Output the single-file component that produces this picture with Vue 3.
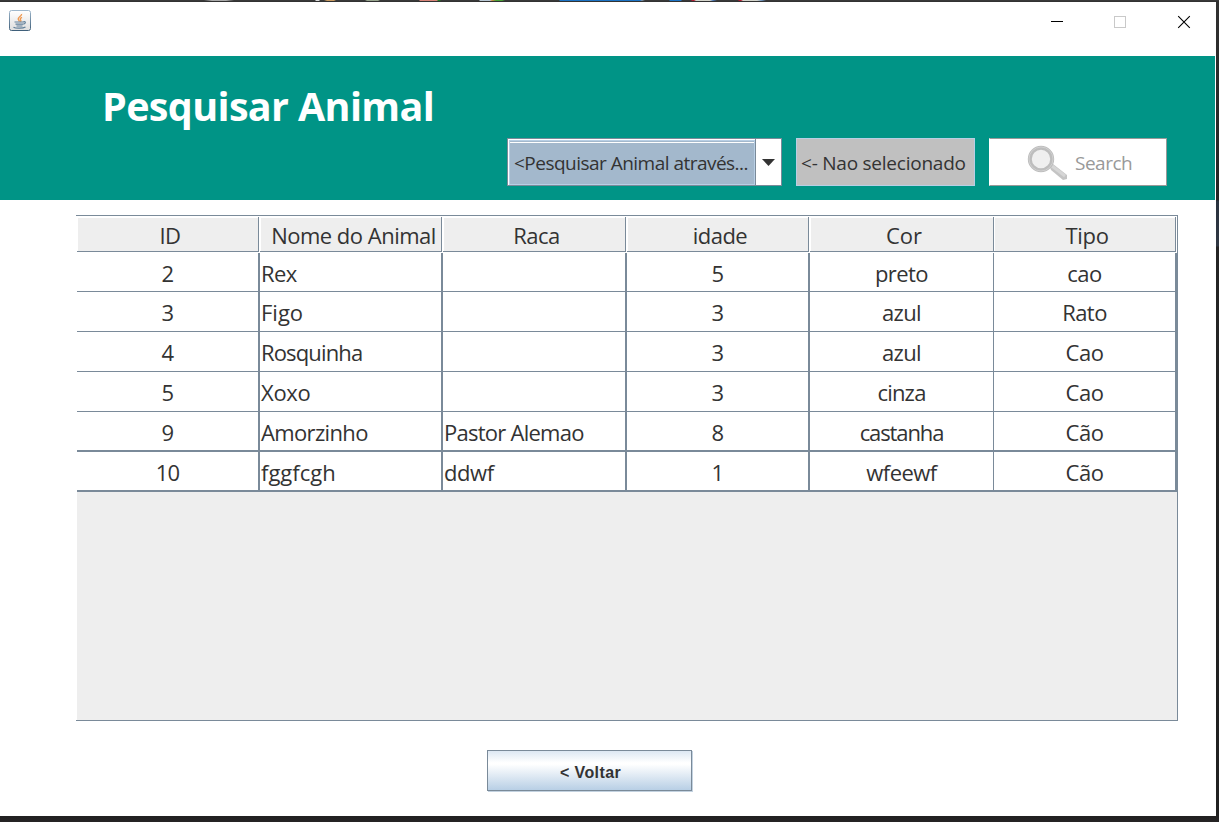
<script setup>
const columns = ['ID', 'Nome do Animal', 'Raca', 'idade', 'Cor', 'Tipo']
const rows = [
  ['2', 'Rex', '', '5', 'preto', 'cao'],
  ['3', 'Figo', '', '3', 'azul', 'Rato'],
  ['4', 'Rosquinha', '', '3', 'azul', 'Cao'],
  ['5', 'Xoxo', '', '3', 'cinza', 'Cao'],
  ['9', 'Amorzinho', 'Pastor Alemao', '8', 'castanha', 'Cão'],
  ['10', 'fggfcgh', 'ddwf', '1', 'wfeewf', 'Cão'],
]

// Letter spacing per word, in pixels
const tracking = {
  'Nome do Animal': -0.5, Cor: -0.1, Tipo: -0.3, Figo: 0, fggfcgh: 0,
  Rosquinha: -0.85, Amorzinho: -0.65, 'Pastor Alemao': -0.75, castanha: -1.1,
  cinza: -0.8, azul: -0.7, 10: -0.9, Xoxo: -0.3, ddwf: -0.4, Cao: -0.4, 'Cão': -0.4,
}
const spacing = (text) => ({ letterSpacing: `${tracking[text] ?? -0.55}px` })
</script>

<template>
  <div class="desktop">
    <div class="backdrop"></div>
    <main class="window">
      <div class="titlebar">
        <svg class="java" width="22" height="22" viewBox="0 0 22 22">
          <defs>
            <linearGradient id="jf" x1="0" y1="0" x2="0" y2="1">
              <stop offset="0" stop-color="#9db6cb" />
              <stop offset="1" stop-color="#3f5f7a" />
            </linearGradient>
            <linearGradient id="jb" x1="0" y1="0" x2="0" y2="1">
              <stop offset="0" stop-color="#ffffff" />
              <stop offset="1" stop-color="#dedede" />
            </linearGradient>
          </defs>
          <rect x=".5" y="2.5" width="21" height="20" rx="2" fill="url(#jb)" stroke="url(#jf)" transform="translate(0 -2)" />
          <path d="M12.6 4c.4 2-3.600 3-3.400 5 .1 1 1 1.600 1.300 2.500M13 7.300c-1.800.8-2.200 1.700-1.300 2.900.4.600.2 1.200-.3 1.600" fill="none" stroke="#ee9850" stroke-width="1.400" />
          <path d="M5.500 12h9.500M6.500 14.200h7.500M7.500 16h6M14.500 11.700c2.500-.8 2.500 2-.3 2.500M4.500 17.200c2 1.300 9.500 1.300 12-.2" fill="none" stroke="#607f99" stroke-width="1.200" />
        </svg>
        <svg class="controls" width="142" height="16" viewBox="0 0 142 16" shape-rendering="crispEdges">
          <path d="M1 7.500h12" stroke="#000" />
          <rect x="64.500" y="2.500" width="11" height="11" fill="none" stroke="#c9c9c9" />
          <path d="M128.200 2.200l11.600 11.600M139.800 2.200l-11.600 11.600" stroke="#000" stroke-width="1.100" shape-rendering="auto" />
        </svg>
      </div>

      <header class="banner">
        <h1>Pesquisar Animal</h1>
        <div class="tools">
          <div class="combo">
            <div class="value"><span>&lt;Pesquisar Animal através...</span></div>
            <div class="arrow"><svg width="13" height="7" viewBox="0 0 13 7"><path d="M0 0h13L6.500 7z" fill="#333" /></svg></div>
          </div>
          <div class="field"><span>&lt;- Nao selecionado</span></div>
          <div class="search">
            <svg width="42" height="38" viewBox="0 0 42 38">
              <path d="M22 21l4-1 14 11v4l-4 1-12-10z" fill="#c4c4c4" />
              <path d="M25 22l13 10" stroke="#d6d6d6" stroke-width="3" />
              <circle cx="14" cy="15" r="11.200" fill="#efefef" stroke="#bdbdbd" stroke-width="4" />
              <circle cx="14" cy="15" r="12" fill="none" stroke="#d0d0d0" stroke-width="1" />
            </svg>
            <span>Search</span>
          </div>
        </div>
      </header>

      <section class="pane">
        <div class="line head">
          <div v-for="c in columns" :key="c" class="th"><span :style="spacing(c)">{{ c }}</span></div>
        </div>
        <div v-for="(r, i) in rows" :key="i" class="line row">
          <div v-for="(v, j) in r" :key="j" class="td"><span :style="spacing(v)">{{ v }}</span></div>
        </div>
      </section>

      <button class="back">&lt; Voltar</button>
    </main>
  </div>
</template>

<style>
body { overflow: hidden; }
</style>

<style scoped>
* { box-sizing: border-box; }
.desktop {
  width: 1219px;
  height: 822px;
  padding: 2px 3px 6px 0;
  background: linear-gradient(#323232 0, #2c2c2c 56px, #242424 200px, #29323e 201px, #2f3742 246px, #242424 247px, #202020 816px, #262425);
  font-family: "Open Sans", "Noto Sans", sans-serif;
  color: #333;
  position: relative;
}
.backdrop {
  position: absolute;
  top: 0;
  left: 0;
  width: 1219px;
  height: 1px;
  background: linear-gradient(90deg, #393939 0 204px, #aaa 212px 226px, #393939 234px 315px, #ddd 316px 319px, #393939 320px 324px, #c99b62 327px 334px, #393939 336px 365px, #98a58e 367px 378px, #393939 380px 419px, #d88479 420px 437px, #237a23 438px 440px, #393939 441px 479px, #b9c8d4 480px 490px, #d58a42 492px, #4ba338 496px 502px, #393939 505px 559px, #1c73c4 560px 640px, #8095a8 642px, #393939 645px 669px, #1c73c4 670px 681px, #393939 682px 691px, #b01c33 692px 694px, #d5d5cc 696px 710px, #4a77b8 713px, #393939 717px 738px, #b01c33 739px 741px, #d5d5cc 743px 757px, #6990bc 762px, #393939 766px);
}
.window {
  width: 1216px;
  height: 814px;
  background: #fff;
}
.titlebar {
  height: 54px;
  display: flex;
  justify-content: space-between;
  align-items: flex-start;
  padding: 8px 24px 0 9px;
}
.controls { margin-top: 4px; }
.banner {
  width: 1215px;
  height: 144px;
  background: #009486;
  padding: 22px 48px 0 102px;
}
h1 {
  margin: 0;
  height: 60px;
  line-height: 56px;
  font-size: 39.5px;
  font-weight: 700;
  letter-spacing: -0.65px;
  color: #fff;
  white-space: nowrap;
}
.tools {
  display: flex;
  justify-content: flex-end;
  font-size: 19px;
  line-height: 46px;
  white-space: nowrap;
}
.combo {
  width: 275px;
  height: 48px;
  border: 1px solid #7a8a99;
  background: #fff;
  display: flex;
  margin-right: 14px;
}
.value {
  width: 246px;
  height: 45px;
  margin: 1px 0 0 1px;
  border: 1px solid #b8cfe5;
  box-shadow: inset 0 1px #a3b8cc, inset 0 2px #fff;
  background: #a3b8cc;
  padding-left: 4px;
  line-height: 45px;
  letter-spacing: -0.52px;
}
.arrow {
  flex: 1;
  border-left: 1px solid #7a8a99;
  display: flex;
  align-items: center;
  justify-content: center;
}
.field {
  width: 179px;
  height: 48px;
  background: #c0c0c0;
  border: 1px solid #b8cfe5;
  padding-left: 4px;
  margin-right: 14px;
  line-height: 48px;
  letter-spacing: -0.23px;
}
.search {
  width: 178px;
  height: 48px;
  background: #fff;
  border: 1px solid #999;
  border-left-color: #fff;
  display: flex;
  align-items: center;
  padding: 2px 0 0 37px;
  color: #999;
  line-height: 46px;
  letter-spacing: -0.5px;
}
.search span { margin-left: 6px; }
.pane {
  width: 1102px;
  height: 506px;
  margin: 15px 0 0 76px;
  border: 1px solid #7a8a99;
  border-left: 0;
  padding-left: 1px;
  background: linear-gradient(#fff, #fff) 0 0 / 1px 100% no-repeat, #eee;
  font-size: 22px;
}
.line {
  display: grid;
  grid-template-columns: 183px 183px 184px 183px 184px 184px;
  grid-template-rows: 100%;
  background: #fff;
  white-space: nowrap;
}
.head {
  height: 37px;
  width: 1100px;
  grid-template-columns: 183px 183px 184px 183px 184px 183px;
  padding-bottom: 1px;
}
.th {
  margin: 1px 1px 0 0;
  border: 1px solid #7a8a99;
  border-width: 0 1px 1px 0;
  box-shadow: inset 1px 1px #fff;
  background: #eee;
  text-align: center;
  padding-left: 5px;
  line-height: 37px;
}
.th:nth-child(2) { padding-left: 6px; }
.th:nth-child(5) { margin-right: 0; }
.row { margin-right: -1px; height: 40px; }
.td {
  border: 0 solid #7a8a99;
  border-width: 0 2px 1px 0;
  text-align: center;
  line-height: 41px;
}
.row:nth-child(2) { height: 39px; }
.row:nth-child(n + 6) .td { border-bottom-width: 2px; }
.td:nth-child(2), .td:nth-child(3) { text-align: left; padding-left: 1px; }
.td:nth-child(5) { border-right-width: 1px; }
.td:nth-child(6) { border-right-width: 3px; }
.back {
  display: block;
  width: 205px;
  height: 41px;
  margin: 29px 0 0 487px;
  padding: 4px 0 0 2px;
  border: 1px solid #7a8a99;
  box-shadow: 1px 1px #c3d2e0;
  background: linear-gradient(#dde8f3, #fff 30%, #fff 34%, #b8cfe5);
  font: bold 16px "Liberation Sans", Arial, sans-serif;
  letter-spacing: 0.4px;
  color: #333;
}
</style>
